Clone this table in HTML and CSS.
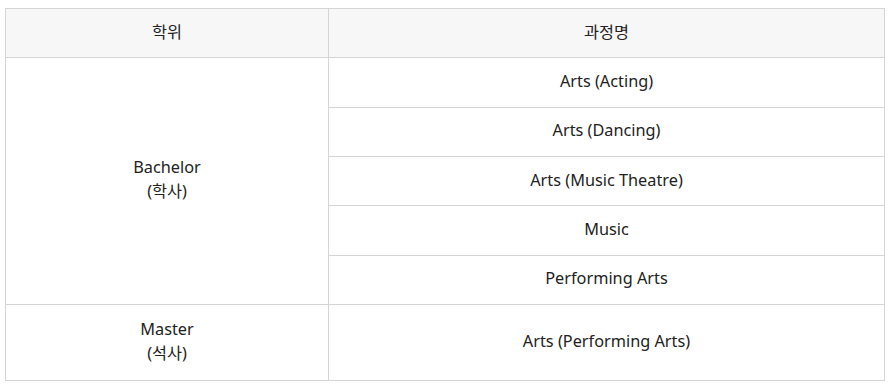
FILE: index.html
```html
<!DOCTYPE html>
<html lang="ko">
<head>
<meta charset="utf-8">
<link rel="stylesheet" href="styles.css">
</head>
<body>
<div class="wrap">
<table class="degrees">
  <colgroup><col class="c1"><col class="c2"></colgroup>
  <thead>
    <tr><th>학위</th><th>과정명</th></tr>
  </thead>
  <tbody>
    <tr><td class="rs" rowspan="5">Bachelor<br>(학사)</td><td>Arts (Acting)</td></tr>
    <tr><td>Arts (Dancing)</td></tr>
    <tr><td>Arts (Music Theatre)</td></tr>
    <tr><td>Music</td></tr>
    <tr><td>Performing Arts</td></tr>
    <tr><td class="two">Master<br>(석사)</td><td>Arts (Performing Arts)</td></tr>
  </tbody>
</table>
</div>
</body>
</html>
```
FILE: styles.css
```css
html, body { margin: 0; padding: 0; background: #fff; }
.wrap { padding: 8px 8px 0 5px; }
.degrees {
  width: 880px;
  border-collapse: collapse;
  font-family: "Noto Sans", "Noto Sans CJK KR", sans-serif;
  font-size: 16.3px;
  line-height: 24px;
  color: #222;
}
.c1 { width: 323px; }
.degrees th, .degrees td {
  border: 1px solid #d5d5d5;
  text-align: center;
  vertical-align: middle;
  padding: 10.67px 8px 13.66px;
  font-weight: normal;
}
.degrees td.rs { padding-top: 9px; padding-bottom: 14px; }
.degrees td.two { padding-top: 12px; padding-bottom: 15px; }
.degrees th { background: #f7f7f7; }
```
